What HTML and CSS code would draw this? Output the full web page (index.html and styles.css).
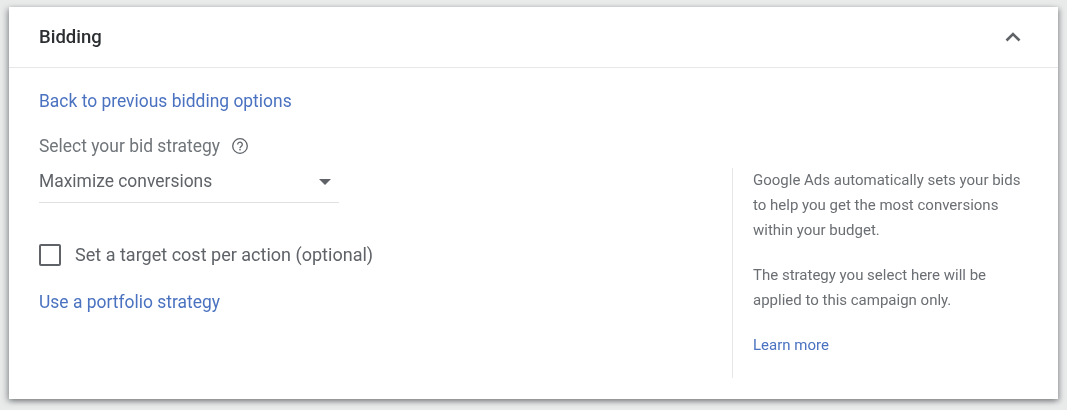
FILE: index.html
```html
<!DOCTYPE html>
<html lang="en">
<head>
<meta charset="utf-8">
<title>Bidding</title>
<link rel="stylesheet" href="styles.css">
</head>
<body>
<section class="card">
  <header class="card-header">
    <h2 class="title">Bidding</h2>
    <svg class="chevron" width="24" height="24" viewBox="0 0 24 24"><path d="M5.500 15.500 12 9l6.500 6.500" fill="none" stroke="#5f6368" stroke-width="2.600"/></svg>
  </header>
  <div class="card-body">
    <div class="main">
      <a class="link back" href="#">Back to previous bidding options</a>
      <div class="label-row">
        <span class="label">Select your bid strategy</span>
        <svg class="help" width="18" height="18" viewBox="0 0 18 18"><circle cx="9" cy="9" r="7.300" fill="none" stroke="#5f6368" stroke-width="1.300"/><path d="M6.700 7.400a2.300 2.300 0 1 1 3.700 1.800c-.8.600-1.400 1-1.400 2" fill="none" stroke="#5f6368" stroke-width="1.300"/><rect x="8.300" y="12" width="1.400" height="1.400" fill="#5f6368"/></svg>
      </div>
      <div class="select">
        <span>Maximize conversions</span>
        <span class="caret"></span>
      </div>
      <label class="check-row">
        <span class="checkbox"></span>
        <span class="check-text">Set a target cost per action (optional)</span>
      </label>
      <a class="link portfolio" href="#">Use a portfolio strategy</a>
    </div>
    <aside class="aside">
      <p class="note">Google Ads automatically sets your bids to help you get the most conversions within your budget.</p>
      <p class="note">The strategy you select here will be applied to this campaign only.</p>
      <a class="link small" href="#">Learn more</a>
    </aside>
  </div>
</section>
</body>
</html>
```
FILE: styles.css
```css
* { box-sizing: border-box; }
html, body { height: 100%; }
body {
  margin: 0;
  padding: 7px 9px 11px;
  background: #e9ebeb;
  font-family: Roboto, "Liberation Sans", sans-serif;
  color: #5f6368;
  overflow: hidden;
}
.card {
  height: 392px;
  background: #fff;
  box-shadow: -2px 2px 6px rgba(60, 64, 67, .45), 2px 2px 5px rgba(60, 64, 67, .35);
  display: flex;
  flex-direction: column;
  filter: blur(.35px);
}
.card-header {
  height: 61px;
  flex: none;
  padding: 0 33px 0 30px;
  border-bottom: 1px solid #e6e8e8;
  display: flex;
  align-items: center;
  justify-content: space-between;
}
.title {
  margin: 0;
  font-size: 18.500px;
  font-weight: 500;
  color: #2c2f31;
}
.chevron { margin-bottom: 1px; }
.card-body {
  flex: 1;
  display: flex;
  justify-content: space-between;
  padding: 22px 0 21px 30px;
}
.main {
  width: 300px;
  display: flex;
  flex-direction: column;
  align-items: flex-start;
  font-size: 17.450px;
  line-height: 22px;
}
.link { color: #4a72c0; text-decoration: none; }
.label-row {
  margin-top: 23px;
  display: flex;
  align-items: center;
  gap: 11px;
}
.label { color: #70757a; }
.select {
  width: 300px;
  height: 36px;
  margin-top: 10px;
  padding-bottom: 8px;
  border-bottom: 1px solid #dfe1e2;
  display: flex;
  align-items: center;
  justify-content: space-between;
}
.caret {
  width: 0;
  height: 0;
  margin-right: 8px;
  margin-top: 2px;
  border-left: 6.500px solid transparent;
  border-right: 6.500px solid transparent;
  border-top: 6px solid #5f6368;
}
.check-row {
  margin-top: 41px;
  display: flex;
  align-items: center;
  gap: 14px;
  white-space: nowrap;
}
.check-text { font-size: 18.050px; }
.checkbox {
  width: 22px;
  height: 22px;
  border: 2px solid #5f6368;
  border-radius: 2px;
}
.portfolio { margin-top: 25px; }
.aside {
  width: 326px;
  margin-top: 78px;
  padding: 0 30px 0 20px;
  border-left: 1px solid #e6e8e8;
  font-size: 15px;
  line-height: 25px;
  color: #6b6f73;
}
.note { margin: 0 0 20px; }
.small { display: block; margin-top: 20px; }
```
